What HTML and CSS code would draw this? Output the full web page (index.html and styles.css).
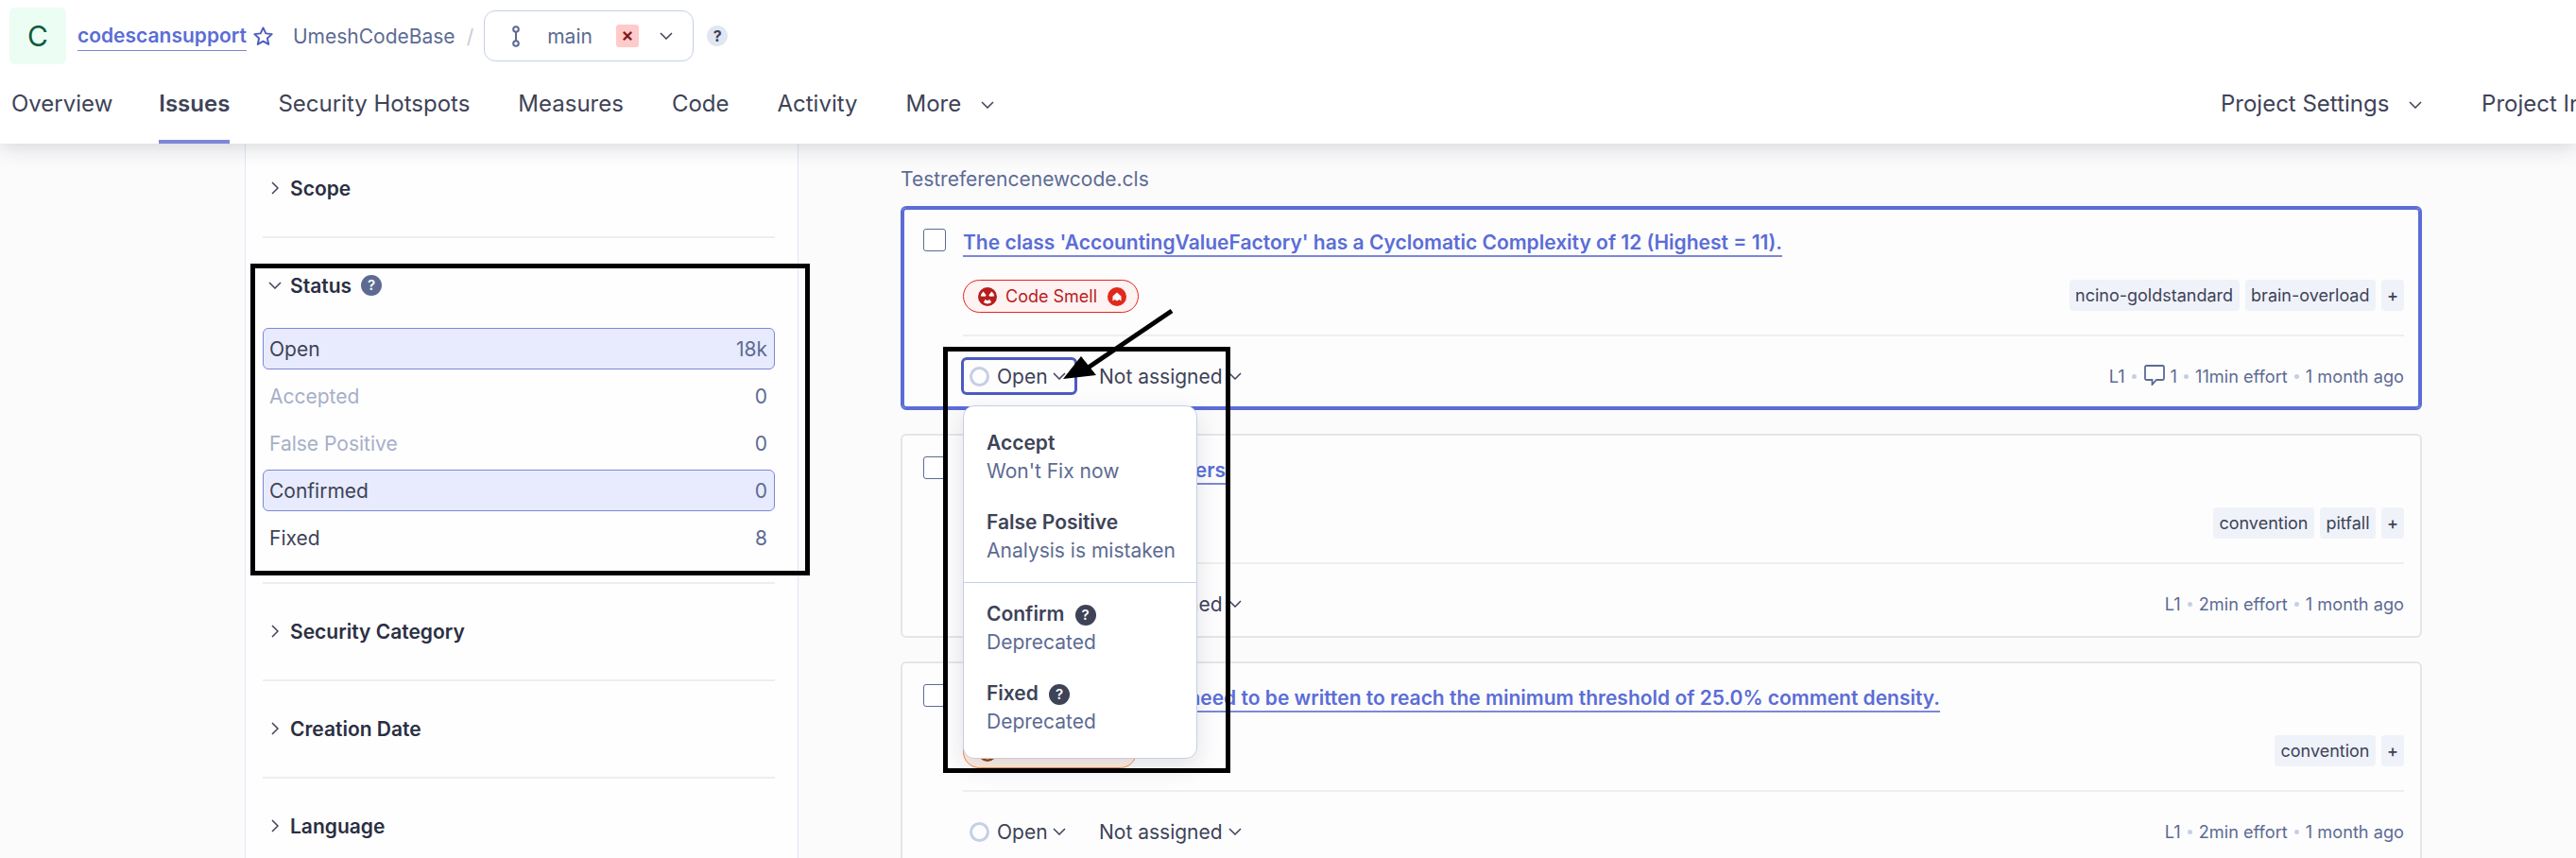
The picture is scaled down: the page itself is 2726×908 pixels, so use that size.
FILE: index.html
```html
<!DOCTYPE html>
<html>
<head>
<meta charset="utf-8">
<title>Issues - UmeshCodeBase</title>
<link rel="stylesheet" href="styles.css">
</head>
<body>
<svg class="defs" width="0" height="0">
	<symbol id="down" viewBox="0 0 14 8"><path d="M1 1l6 6 6-6" fill="none" stroke="currentColor" stroke-width="1.5"/></symbol>
	<symbol id="right" viewBox="0 0 8 14"><path d="M1 1l6 6-6 6" fill="none" stroke="currentColor" stroke-width="1.5"/></symbol>
	<symbol id="smell" viewBox="0 0 20 20">
		<circle cx="10" cy="10" r="10" fill="currentColor"/>
		<path d="M8.600 8.200L5.600 4.400A7.400 7.400 0 0 0 2.800 9.600L7.600 9.800zM11.400 8.200l3-3.800a7.400 7.400 0 0 1 2.800 5.200l-4.800.2zM7.800 12.700l-2 3.300a7.400 7.400 0 0 0 8.400 0l-2-3.300a3 3 0 0 1-4.400 0z" fill="#fff"/>
	</symbol>
	<symbol id="blocker" viewBox="0 0 20 20">
		<circle cx="10" cy="10" r="10" fill="#e0281c"/>
		<path d="M5.500 9.500L10 5.500l4.500 4v5l-2.200-1.500-2.300 1.500-2.300-1.500-2.200 1.500z" fill="#fff"/>
	</symbol>
</svg>

<header class="topbar">
	<div class="crumbs">
		<div class="avatar">C</div>
		<a class="org">codescansupport</a>
		<svg class="star" width="23" height="23" viewBox="0 0 24 24"><path d="M12 2.500l2.900 6.200 6.700.8-5 4.600 1.400 6.700-6-3.400-6 3.400 1.400-6.700-5-4.600 6.700-.8z" fill="none" stroke="#4b5bc0" stroke-width="2" stroke-linejoin="round"/></svg>
		<span class="project">UmeshCodeBase</span>
		<span class="slash">/</span>
		<div class="branch">
			<svg width="10" height="23" viewBox="0 0 10 23"><circle cx="5" cy="4" r="2.800" fill="none" stroke="#5d6b93" stroke-width="2"/><circle cx="5" cy="19" r="2.800" fill="none" stroke="#5d6b93" stroke-width="2"/><path d="M5 7v9" stroke="#5d6b93" stroke-width="2"/></svg>
			<span class="branch-name">main</span>
			<span class="branch-bad">×</span>
			<svg class="branch-arrow" width="14" height="8"><use href="#down"/></svg>
		</div>
		<span class="hint">?</span>
	</div>
	<nav class="tabs">
		<a>Overview</a>
		<a class="tab-on">Issues</a>
		<a>Security Hotspots</a>
		<a>Measures</a>
		<a>Code</a>
		<a>Activity</a>
		<a class="tab-menu">More <svg width="14" height="8"><use href="#down"/></svg></a>
		<a class="tab-menu tab-settings">Project Settings <svg width="14" height="8"><use href="#down"/></svg></a>
		<a class="tab-info">Project Information</a>
	</nav>
</header>

<div class="page">
	<aside class="filters">
		<section class="facet">
			<h3><svg width="8" height="14"><use href="#right"/></svg>Scope</h3>
		</section>
		<section class="facet facet-open">
			<h3><svg class="open-arrow" width="14" height="8"><use href="#down"/></svg>Status <span class="help help-status">?</span></h3>
			<ul class="status-list">
				<li class="on"><span>Open</span><span class="num">18k</span></li>
				<li class="off"><span>Accepted</span><span class="num">0</span></li>
				<li class="off"><span>False Positive</span><span class="num">0</span></li>
				<li class="on"><span>Confirmed</span><span class="num">0</span></li>
				<li><span>Fixed</span><span class="num">8</span></li>
			</ul>
		</section>
		<section class="facet">
			<h3><svg width="8" height="14"><use href="#right"/></svg>Security Category</h3>
		</section>
		<section class="facet">
			<h3><svg width="8" height="14"><use href="#right"/></svg>Creation Date</h3>
		</section>
		<section class="facet">
			<h3><svg width="8" height="14"><use href="#right"/></svg>Language</h3>
		</section>
	</aside>

	<main class="issues">
		<div class="filename">Testreferencenewcode.cls</div>

		<article class="card card-on">
			<div class="card-top">
				<span class="check"></span>
				<a class="title">The class 'AccountingValueFactory' has a Cyclomatic Complexity of 12 (Highest = 11).</a>
			</div>
			<div class="card-mid">
				<span class="pill"><svg width="20" height="20"><use href="#smell"/></svg>Code Smell<svg class="pill-end" width="20" height="20"><use href="#blocker"/></svg></span>
				<div class="tags"><span>ncino-goldstandard</span><span>brain-overload</span><span class="tag-add">+</span></div>
			</div>
			<div class="card-foot">
				<span class="state state-on"><i class="ring"></i>Open<svg width="14" height="8"><use href="#down"/></svg></span>
				<span class="assignee">Not assigned<svg width="14" height="8"><use href="#down"/></svg></span>
				<div class="meta">L1<b></b><svg width="22" height="22" viewBox="0 0 22 22"><path d="M2.500 1h17a1.500 1.500 0 0 1 1.500 1.500v12a1.500 1.500 0 0 1-1.500 1.500H13l-4.500 5v-5h-6A1.500 1.500 0 0 1 1 14.500v-12A1.500 1.500 0 0 1 2.500 1z" fill="none" stroke="#5d6b93" stroke-width="1.800"/></svg><span class="meta-count">1</span><b></b>11min effort<b></b>1 month ago</div>
			</div>

			<div class="dropdown">
				<div class="opt"><strong>Accept</strong><span>Won't Fix now</span></div>
				<div class="opt"><strong>False Positive</strong><span>Analysis is mistaken</span></div>
				<hr>
				<div class="opt"><strong>Confirm <em class="help">?</em></strong><span>Deprecated</span></div>
				<div class="opt"><strong>Fixed <em class="help">?</em></strong><span>Deprecated</span></div>
			</div>
		</article>

		<article class="card">
			<div class="card-top">
				<span class="check"></span>
				<a class="title">Avoid too many parameters</a>
			</div>
			<div class="card-mid">
				<span class="pill"><svg width="20" height="20"><use href="#smell"/></svg>Code Smell<svg class="pill-end" width="20" height="20"><use href="#blocker"/></svg></span>
				<div class="tags"><span>convention</span><span>pitfall</span><span class="tag-add">+</span></div>
			</div>
			<div class="card-foot">
				<span class="state"><i class="ring"></i>Open<svg width="14" height="8"><use href="#down"/></svg></span>
				<span class="assignee">Not assigned<svg width="14" height="8"><use href="#down"/></svg></span>
				<div class="meta">L1<b></b>2min effort<b></b>1 month ago</div>
			</div>
		</article>

		<article class="card">
			<div class="card-top">
				<span class="check"></span>
				<a class="title">12 more comment lines need to be written to reach the minimum threshold of 25.0% comment density.</a>
			</div>
			<div class="card-mid">
				<span class="pill pill-warn"><svg width="20" height="20"><use href="#smell"/></svg>Code Smell</span>
				<div class="tags"><span>convention</span><span class="tag-add">+</span></div>
			</div>
			<div class="card-foot">
				<span class="state"><i class="ring"></i>Open<svg width="14" height="8"><use href="#down"/></svg></span>
				<span class="assignee">Not assigned<svg width="14" height="8"><use href="#down"/></svg></span>
				<div class="meta">L1<b></b>2min effort<b></b>1 month ago</div>
			</div>
		</article>
	</main>
</div>

<!-- hand drawn marks on top of the screenshot -->
<div class="mark mark-status"></div>
<div class="mark mark-menu"></div>
<svg class="mark-arrow" width="130" height="90" viewBox="0 0 130 90">
	<path d="M122 5L32 66" stroke="#000" stroke-width="5"/>
	<path d="M7 77L26 53 42 73z" fill="#000"/>
</svg>
</body>
</html>
```

FILE: styles.css
```css
*{margin:0;padding:0;box-sizing:border-box;list-style:none;}
html,body{height:908px;overflow:hidden;}
body{position:relative;background:#fbfbfc;font-family:Inter,"Noto Sans",sans-serif;font-size:21px;color:#3e4357;}
.defs{position:absolute;}
svg{flex:none;}

.topbar{position:relative;z-index:2;height:152px;background:#fff;box-shadow:0 2px 22px rgba(30,35,60,.2);}
.crumbs{display:flex;align-items:center;height:76px;padding-left:10px;}
.avatar{width:60px;height:60px;border-radius:6px;background:#ecfdf3;color:#0b5c3c;font-size:30px;line-height:60px;text-align:center;}
.org{margin-left:12px;font-weight:600;color:#5b6dd6;border-bottom:1.5px solid #7c87d8;line-height:30px;}
.star{margin-left:6px;}
.project{margin-left:20px;color:#5d6b93;}
.slash{margin:0 12px;color:#c9cbd2;}
.branch{display:flex;align-items:center;width:222px;height:54px;margin-left:-1px;padding-left:28px;border:1.5px solid #c5cfe5;border-radius:12px;color:#5d6b93;}
.branch-name{margin-left:28px;}
.branch-bad{width:24px;height:24px;margin-left:25px;border-radius:3px;background:#fecaca;color:#7f1d1d;font-size:20px;font-weight:600;line-height:23px;text-align:center;}
.branch-arrow{margin-left:22px;color:#3e4357;}
.hint{width:22px;height:22px;margin-left:14px;border-radius:50%;background:#e1e6f3;color:#3e4357;font-size:16px;font-weight:700;line-height:22px;text-align:center;}

.tabs{display:flex;gap:51px;height:76px;padding-left:12px;font-size:24px;line-height:68px;white-space:nowrap;}
.tabs a{display:block;flex:none;height:76px;}
.tab-on{margin-left:-2px;font-weight:600;border-bottom:4px solid #7c87d8;}
.tab-menu svg{margin-left:14px;vertical-align:3px;}
.tab-settings{margin-left:1247px;}
.tab-info{margin-left:12px;}

.page{display:flex;height:756px;}
.filters{flex:none;width:586px;margin-left:259px;padding:32px 24px 0 18px;background:#fefefe;border-left:1px solid #e1e6f3;border-right:1px solid #e1e6f3;}
.facet{padding-bottom:36px;margin-bottom:35px;border-bottom:2px solid #eee;}
.facet h3{display:flex;align-items:center;height:30px;font-size:21px;font-weight:600;color:#2a2f42;}
.facet h3 svg{margin:0 12px 0 9px;color:#3e4357;}
.facet h3 .open-arrow{margin:0 9px 0 6px;}
.facet-open{padding-bottom:25px;}
.help{display:inline-block;width:22px;height:22px;border-radius:50%;background:#3e4357;color:#fff;font-size:15px;font-style:normal;font-weight:600;line-height:22px;text-align:center;vertical-align:1px;}
.help-status{margin-left:10px;background:#5d6b93;}
.status-list{display:flex;flex-direction:column;gap:6px;margin-top:30px;}
.status-list li{display:flex;justify-content:space-between;align-items:center;height:44px;padding:0 7px 0 6px;border:1px solid transparent;border-radius:6px;}
.status-list li.on{background:#e8ebfd;border-color:#7c87d8;}
.status-list li.off span:first-child{color:#a6afc8;}
.num{color:#5d6b93;}

.issues{flex:1;padding:23px 163px 0 108px;}
.filename{height:30px;margin-bottom:13px;line-height:30px;color:#5d6b93;}
.card{position:relative;height:216px;margin-bottom:25px;padding:22px 17px 0 22px;background:#fdfdfe;border:2px solid #e4e5e8;border-radius:6px;}
.card-on{border-color:#5b6dd6;box-shadow:inset 0 0 0 2px #5b6dd6;}
.card-top{display:flex;height:30px;}
.check{flex:none;width:24px;height:24px;margin:0 18px 0 0;background:#fff;border:1.5px solid #5d6b93;border-radius:3px;}
.title{font-weight:600;line-height:30px;color:#5b6dd6;text-decoration:underline;text-decoration-color:#7c87d8;text-decoration-thickness:1.5px;text-underline-offset:6px;white-space:nowrap;}
.card-mid{display:flex;justify-content:space-between;align-items:flex-start;height:60px;margin-top:24px;margin-left:42px;border-bottom:2px solid #eee;}
.pill{display:flex;align-items:center;height:35px;padding:0 12px 0 15px;background:#fef2f2;border:1.5px solid #e0281c;border-radius:18px;color:#b91c1c;font-size:18px;}
.pill>svg:first-child{margin-right:9px;}
.pill-end{margin-left:11px;}
.pill-warn{width:184px;background:#fdefe4;border-color:#f58a42;color:#a0440f;}
.tags{display:flex;gap:6px;}
.tags span{height:33px;padding:0 6.500px;background:#eff2f9;border-radius:4px;font-size:18px;line-height:33px;}
.tags .tag-add{width:24px;padding:0;text-align:center;font-weight:500;}
.card-foot{display:flex;align-items:center;height:40px;margin:22px 0 0 40px;}
.state{display:flex;align-items:center;width:123px;height:40px;padding-left:6px;border:3px solid transparent;border-radius:6px;}
.state-on{border-color:#4b5bc0;}
.state svg{margin-left:5px;}
.ring{flex:none;width:21px;height:21px;margin-right:8px;border:3px solid #c5cfe5;border-radius:50%;}
.assignee{display:flex;align-items:center;margin-left:23px;}
.assignee svg{margin-left:6px;}
.meta{display:flex;align-items:center;margin-left:auto;color:#5d6b93;font-size:18.200px;}
.meta b{width:5px;height:5px;margin:0 7px;border-radius:50%;background:#c5cfe5;}
.meta svg{margin:-2px 6px 0 1px;}

.dropdown{position:absolute;z-index:3;left:64px;top:209px;width:248px;height:374px;padding:12px 0;background:#fff;border:1.5px solid #c5cfe5;border-radius:12px;box-shadow:0 8px 24px rgba(30,35,60,.12);}
.opt{display:flex;flex-direction:column;justify-content:center;height:84px;padding-left:24px;}
.opt strong{font-weight:600;line-height:30px;}
.opt strong .help{margin-left:6px;}
.opt span{line-height:30px;color:#5d6b93;}
.dropdown hr{height:1px;margin:6px 0;background:#c5cfe5;border:0;}

.mark{position:absolute;z-index:4;border:5px solid #000;}
.mark-status{left:265px;top:279px;width:592px;height:330px;}
.mark-menu{left:998px;top:367px;width:304px;height:451px;}
.mark-arrow{position:absolute;z-index:5;left:1118px;top:324px;}
```
